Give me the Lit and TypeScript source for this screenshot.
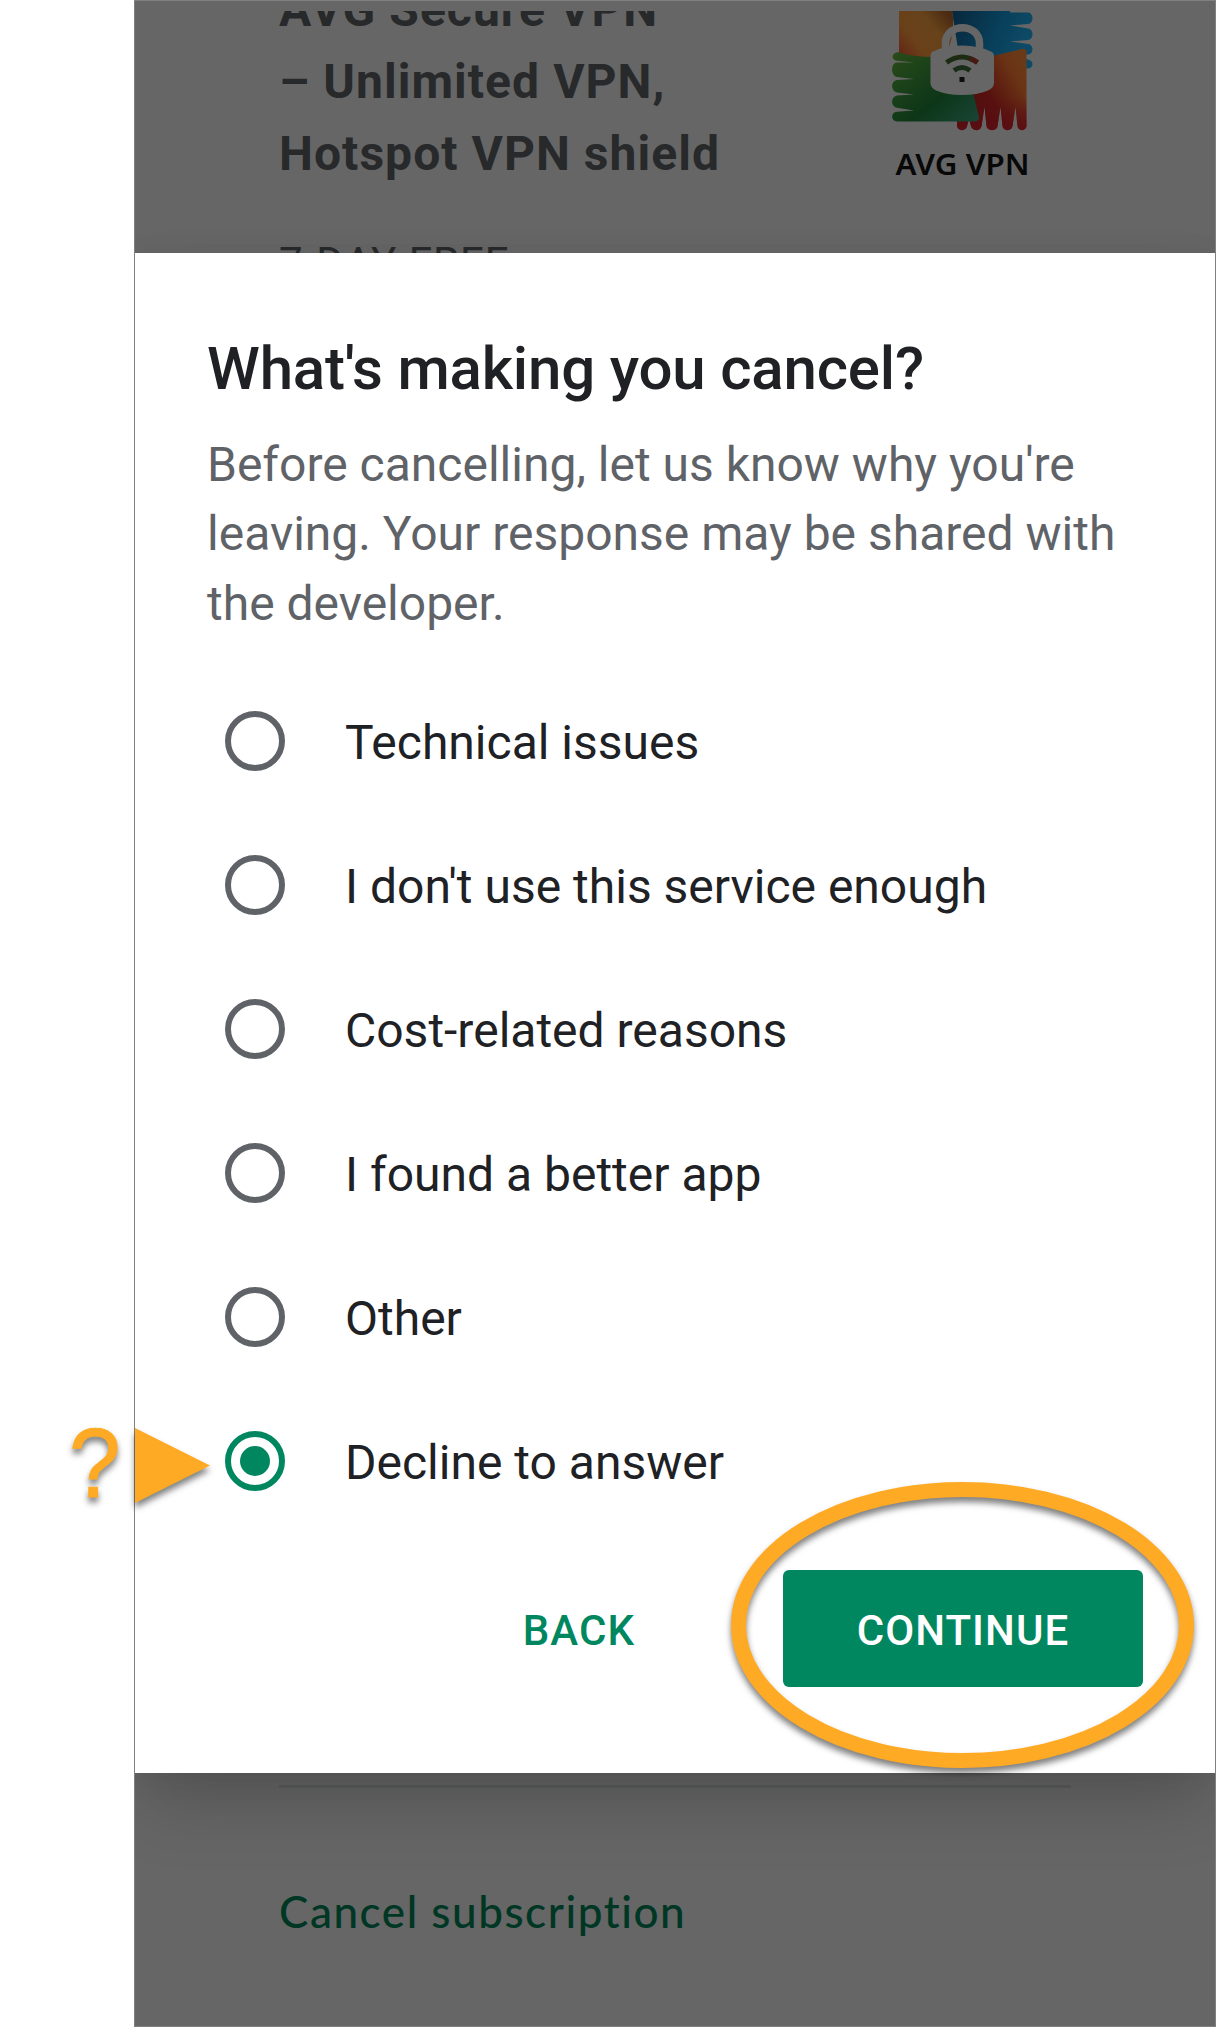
import { LitElement, html, css } from "lit";
import { customElement, property, state } from "lit/decorators.js";

@customElement("avg-logo")
class AvgLogo extends LitElement {
  static styles = css`
    :host { display: block; width: 200px; height: 190px; }
    .art { display: block; }
    .name { font: 600 29.500px "Noto Sans", "Open Sans", sans-serif; fill: #080808; }
  `;

  render() {
    return html`
      <svg class="art" width="200" height="190" viewBox="0 0 200 190">
        <defs>
          <linearGradient id="amber" x1="1" y1="0.2" x2="0" y2="0.9">
            <stop offset="0" stop-color="#4a2a12" />
            <stop offset="0.3" stop-color="#66421a" />
            <stop offset="0.7" stop-color="#6a4019" />
            <stop offset="1" stop-color="#652616" />
          </linearGradient>
          <linearGradient id="blue" x1="0" y1="0" x2="1" y2="0.3">
            <stop offset="0" stop-color="#08273b" />
            <stop offset="0.6" stop-color="#083f5a" />
            <stop offset="1" stop-color="#0e4a66" />
          </linearGradient>
          <linearGradient id="green" x1="0" y1="0" x2="1" y2="1">
            <stop offset="0" stop-color="#2c4b19" />
            <stop offset="0.25" stop-color="#1d4319" />
            <stop offset="0.6" stop-color="#0d3618" />
            <stop offset="1" stop-color="#194536" />
          </linearGradient>
          <linearGradient id="red" x1="0.1" y1="0.8" x2="1" y2="0.2">
            <stop offset="0" stop-color="#4c0b0e" />
            <stop offset="0.4" stop-color="#57110e" />
            <stop offset="0.8" stop-color="#6a3315" />
            <stop offset="1" stop-color="#6a3a18" />
          </linearGradient>
          <linearGradient id="tips" x1="0" y1="0" x2="0" y2="1">
            <stop offset="0.6" stop-color="#5a0e12" stop-opacity="0" />
            <stop offset="1" stop-color="#5a0e12" />
          </linearGradient>
        </defs>
        <path fill="url(#blue)" d="M92 11H150V12.500H168C174 13 174 23.500 168 24L150 25.500L168 28.500C174 29 174 39.500 168 40L150 41.500L168 44C174 44.500 174 54 168 54.500L160 56L168 59.500C174 60.500 174 68 168 68.500L140 66L100 62Z" />
        <path fill="url(#amber)" d="M39 11H92Q96 30 86 57H39Z" />
        <path fill="url(#red)" d="M116 60L162 49Q166.500 48 166.500 53V126C166 131.500 158 131.500 157.500 126L155.500 107L152.500 126C152 131.500 143 131.500 142.500 126L140.500 107L137.500 126C137 131.500 127 131.500 126.500 126L124.500 107L121.500 126C121 131.500 112 131.500 111 126L109 119L107 126C106 131.500 98 131.500 97 126V118Z" />
        <path fill="url(#tips)" d="M116 60L162 49Q166.500 48 166.500 53V126C166 131.500 158 131.500 157.500 126L155.500 107L152.500 126C152 131.500 143 131.500 142.500 126L140.500 107L137.500 126C137 131.500 127 131.500 126.500 126L124.500 107L121.500 126C121 131.500 112 131.500 111 126L109 119L107 126C106 131.500 98 131.500 97 126V118Z" />
        <path fill="url(#green)" d="M38 52Q52 57 74 57H95L112 88L119 117Q119 121.500 114 121.500H37C31 121.500 30 112.500 37 111.800L54 110.500L37 107.800C31 107 30 97 37 95.500L54 94.500L37 92.500C31 91.500 30 81 37 80L54 79L37 77C31 76 30 63.500 37 62.500L54 62.500L37 60.800C31 60 31 53 38 52Z" />
        <path fill="none" stroke="#666" stroke-width="7.500" d="M85.500 54V43C86 22.500 119 22.500 119.500 43V54" />
        <path fill="#666" d="M72 52Q84 45.500 102 45.500T132 52Q134 53 134 57V83Q134 88 128 90.500Q117 95 102 95T76 90.500Q70.500 88 70.500 83V57Q70.500 53 72 52Z" />
        <path fill="none" stroke="#1c2b12" stroke-width="5" d="M86.500 62.500Q102 51.500 117.500 62.500" />
        <path fill="none" stroke="#182c17" stroke-width="5" d="M94 70.500Q102 64.500 110 70.500" />
        <path fill="none" stroke="#451b12" stroke-width="5" d="M110 58.700Q114 60 117.500 62.500" />
        <rect x="99.500" y="77" width="5" height="5" fill="#0b0f0b" />
        <text class="name" x="35.500" y="174.500" textLength="134" lengthAdjust="spacingAndGlyphs">AVG VPN</text>
      </svg>
    `;
  }
}

@customElement("reason-option")
class ReasonOption extends LitElement {
  @property() label = "";
  @property({ type: Boolean }) checked = false;

  static styles = css`
    :host { display: flex; align-items: center; gap: 60px; height: 144px; cursor: pointer; }
    .ring {
      box-sizing: border-box; width: 60px; height: 60px; flex: none;
      border: 6px solid #5f6368; border-radius: 50%;
      display: grid; place-items: center;
    }
    .ring.on { border-color: #01875f; }
    .dot { width: 30px; height: 30px; border-radius: 50%; background: #01875f; }
    .label { padding-top: 3px; white-space: nowrap; }
  `;

  render() {
    return html`
      <span class=${this.checked ? "ring on" : "ring"}>
        ${this.checked ? html`<span class="dot"></span>` : null}
      </span>
      <span class="label">${this.label}</span>
    `;
  }
}

@customElement("app-root")
class AppRoot extends LitElement {
  @state() private selected = 5;

  private reasons = [
    "Technical issues",
    "I don't use this service enough",
    "Cost-related reasons",
    "I found a better app",
    "Other",
    "Decline to answer",
  ];

  static styles = css`
    :host {
      display: block; position: relative; box-sizing: border-box;
      height: 2027px; padding-left: 134px; background: #fff; overflow: hidden;
      font-family: Roboto, "Liberation Sans", sans-serif; color: #202124;
    }
    .screen {
      box-sizing: border-box; height: 2027px; border: 1px solid #808080;
      background: #666; display: flex; flex-direction: column; overflow: hidden;
    }
    .top {
      height: 242px; margin-top: 10px; flex: none; overflow: hidden;
      display: flex; justify-content: space-between; padding: 0 155px 0 144px;
      color: #27292a;
    }
    .app { margin-top: -37px; }
    .app-title { font-size: 48px; line-height: 72px; font-weight: 700; white-space: nowrap; letter-spacing: 1.050px; }
    .trial { margin-top: 46px; font-size: 42px; line-height: 54px; letter-spacing: 1.050px; }
    .logo { margin-top: -11px; }
    .dialog {
      position: relative; flex: none; box-sizing: border-box; height: 1520px;
      padding: 80px 72px 0; background: #fff;
      box-shadow: 0 36px 66px -8px rgba(0, 0, 0, 0.19), 0 4px 30px rgba(0, 0, 0, 0.06);
    }
    .heading { margin: 0; font-size: 60px; line-height: 72px; font-weight: 500; white-space: nowrap; letter-spacing: -0.190px; }
    .lead { margin: 25px 0 0; height: 208px; font-size: 48px; line-height: 69.340px; color: #5f6368; white-space: nowrap; }
    .options { margin: 31px 0 0 18px; font-size: 48px; line-height: 60px; }
    .actions { margin-top: 37px; display: flex; justify-content: flex-end; align-items: stretch; gap: 76px; }
    .btn {
      box-sizing: border-box; height: 117px; border: 0; border-radius: 6px;
      padding: 4px 0 0; font: 500 42px/50px Roboto, sans-serif; letter-spacing: 1.050px;
      background: none; color: #01875f;
    }
    .back { padding-left: 72px; padding-right: 72px; }
    .continue { width: 360px; background: #01875f; color: #fff; }
    .bottom { flex: 1; padding: 12px 144px 0; }
    .rule { height: 3px; background: #5b5c5d; }
    .cancel {
      margin-top: 93px; font: 500 44px/60px Lato, Roboto, sans-serif;
      color: #003624; white-space: nowrap; letter-spacing: 1.550px;
    }
    .notes { position: absolute; left: 0; top: 0; pointer-events: none; }
    .mark { font: 97.500px "Liberation Sans", Arial, sans-serif; fill: #ffaa24; stroke: #ffaa24; stroke-width: 1px; }
    .shaded { filter: drop-shadow(0 5px 3px rgba(0, 0, 0, 0.5)); }
  `;

  render() {
    return html`
      <main class="screen">
        <section class="top">
          <div class="app">
            <div class="app-title">AVG Secure VPN<br />– Unlimited VPN,<br />Hotspot VPN shield</div>
            <div class="trial">7-DAY FREE</div>
          </div>
          <avg-logo class="logo"></avg-logo>
        </section>
        <section class="dialog">
          <h1 class="heading">What's making you cancel?</h1>
          <p class="lead">Before cancelling, let us know why you're<br />leaving. Your response may be shared with<br />the developer.</p>
          <div class="options">
            ${this.reasons.map((label, i) => html`
              <reason-option
                .label=${label}
                .checked=${i === this.selected}
                @click=${() => { this.selected = i; }}
              ></reason-option>
            `)}
          </div>
          <div class="actions">
            <button class="btn back">BACK</button>
            <button class="btn continue">CONTINUE</button>
          </div>
        </section>
        <section class="bottom">
          <div class="rule"></div>
          <div class="cancel">Cancel subscription</div>
        </section>
      </main>
      <svg class="notes" width="1216" height="2027" viewBox="0 0 1216 2027">
        <g class="shaded">
          <text class="mark" transform="translate(69 1496.500) scale(0.95 1)">?</text>
          <path d="M135 1428L210 1465.500L135 1503Z" fill="#ffaa24" />
          <ellipse cx="962.500" cy="1625" rx="224" ry="135.500" fill="none" stroke="#ffaa24" stroke-width="15" />
        </g>
      </svg>
    `;
  }
}
